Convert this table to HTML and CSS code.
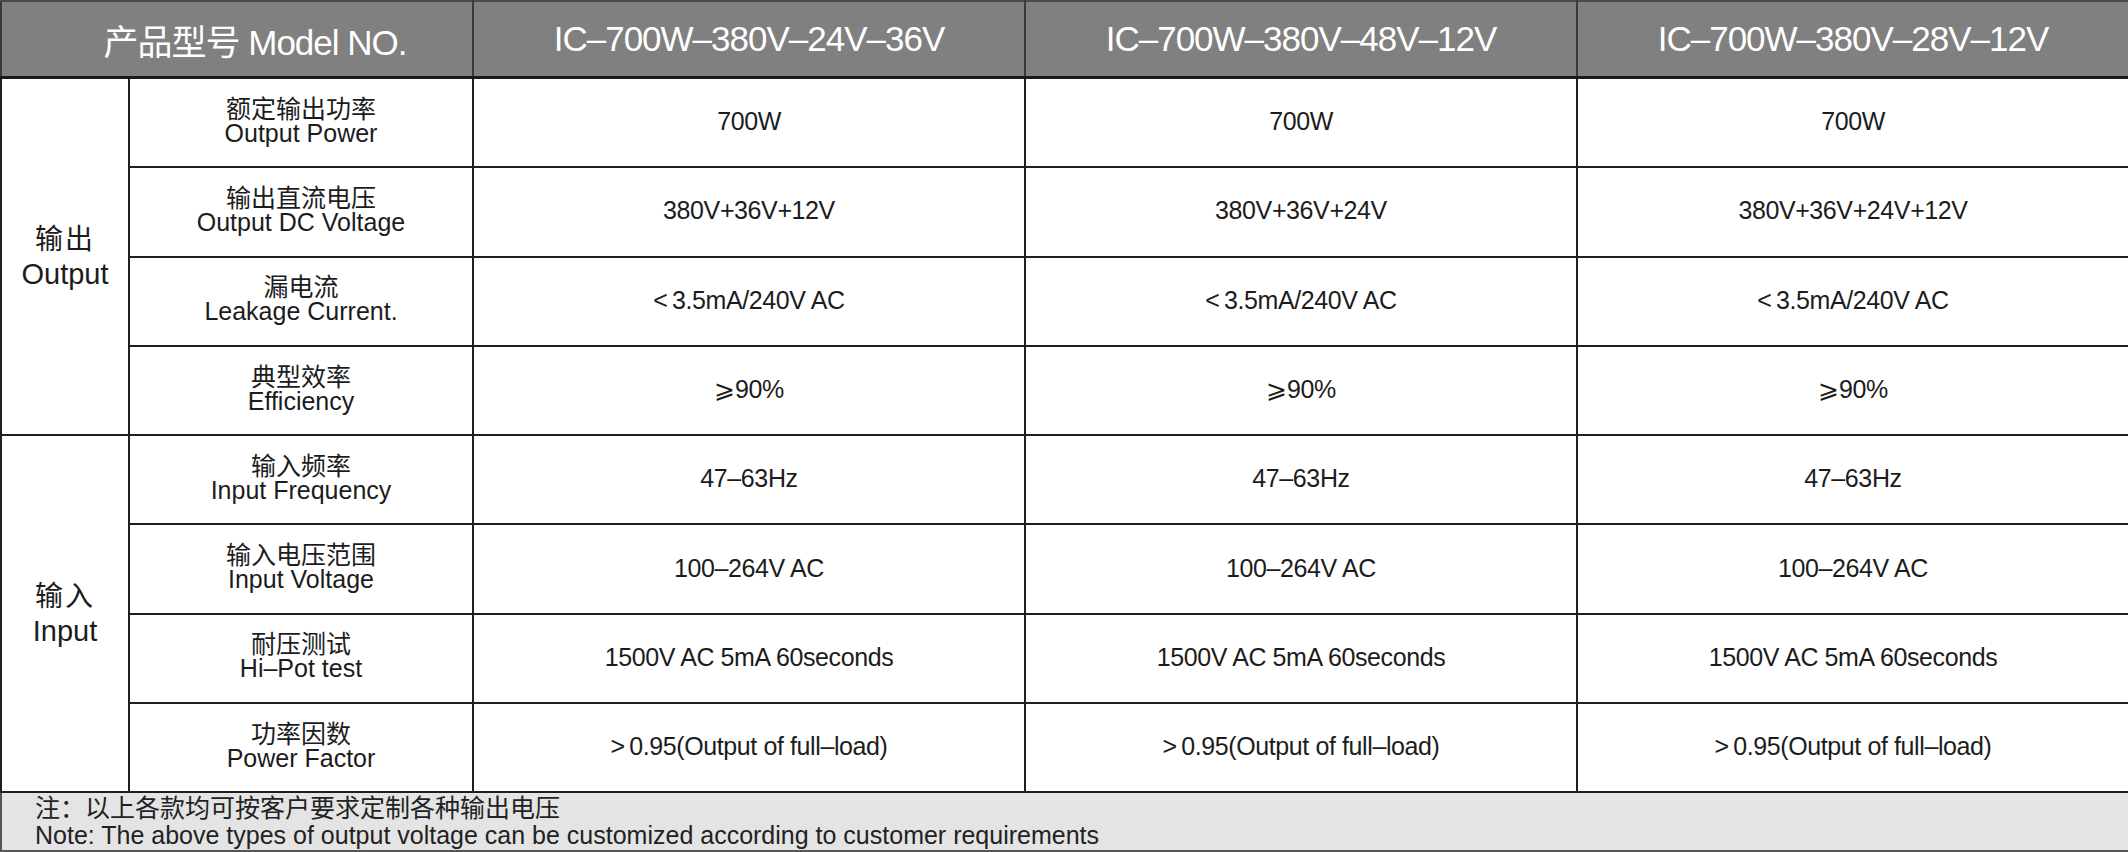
FILE: index.html
```html
<!DOCTYPE html>
<html lang="zh-CN">
<head>
<meta charset="utf-8">
<title>IC-700W 规格表</title>
<link rel="stylesheet" href="styles.css">
</head>
<body>
<table class="spec">
  <colgroup>
    <col class="c-group">
    <col class="c-label">
    <col class="c-data">
    <col class="c-data">
    <col class="c-data">
  </colgroup>
  <thead>
    <tr class="head">
      <th colspan="2" class="head-title">产品型号 Model NO.</th>
      <th>IC–700W–380V–24V–36V</th>
      <th>IC–700W–380V–48V–12V</th>
      <th>IC–700W–380V–28V–12V</th>
    </tr>
  </thead>
  <tbody>
    <tr>
      <td rowspan="4" class="group"><span class="zh">输出</span><span class="en">Output</span></td>
      <td class="label"><span class="zh">额定输出功率</span><span class="en">Output Power</span></td>
      <td>700W</td><td>700W</td><td>700W</td>
    </tr>
    <tr>
      <td class="label"><span class="zh">输出直流电压</span><span class="en">Output DC Voltage</span></td>
      <td>380V+36V+12V</td><td>380V+36V+24V</td><td>380V+36V+24V+12V</td>
    </tr>
    <tr>
      <td class="label"><span class="zh">漏电流</span><span class="en">Leakage Current.</span></td>
      <td>&lt;&#8201;3.5mA/240V AC</td><td>&lt;&#8201;3.5mA/240V AC</td><td>&lt;&#8201;3.5mA/240V AC</td>
    </tr>
    <tr>
      <td class="label"><span class="zh">典型效率</span><span class="en">Efficiency</span></td>
      <td>⩾90%</td><td>⩾90%</td><td>⩾90%</td>
    </tr>
    <tr>
      <td rowspan="4" class="group"><span class="zh">输入</span><span class="en">Input</span></td>
      <td class="label"><span class="zh">输入频率</span><span class="en">Input Frequency</span></td>
      <td>47–63Hz</td><td>47–63Hz</td><td>47–63Hz</td>
    </tr>
    <tr>
      <td class="label"><span class="zh">输入电压范围</span><span class="en">Input Voltage</span></td>
      <td>100–264V AC</td><td>100–264V AC</td><td>100–264V AC</td>
    </tr>
    <tr>
      <td class="label"><span class="zh">耐压测试</span><span class="en">Hi–Pot test</span></td>
      <td>1500V AC 5mA 60seconds</td><td>1500V AC 5mA 60seconds</td><td>1500V AC 5mA 60seconds</td>
    </tr>
    <tr>
      <td class="label"><span class="zh">功率因数</span><span class="en">Power Factor</span></td>
      <td>&gt;&#8201;0.95(Output of full–load)</td><td>&gt;&#8201;0.95(Output of full–load)</td><td>&gt;&#8201;0.95(Output of full–load)</td>
    </tr>
  </tbody>
  <tfoot>
    <tr class="note">
      <td colspan="5">
        <span class="zh">注：以上各款均可按客户要求定制各种输出电压</span>
        <span class="en">Note: The above types of output voltage can be customized according to customer requirements</span>
      </td>
    </tr>
  </tfoot>
</table>
</body>
</html>
```

FILE: styles.css
```css
html, body {
  margin: 0;
  padding: 0;
  background: #ffffff;
}

body {
  width: 2128px;
  height: 852px;
  overflow: hidden;
  font-family: "Liberation Sans", "Noto Sans CJK SC", sans-serif;
  color: #1c1c1c;
}

.spec {
  width: 2128px;
  border-collapse: collapse;
  table-layout: fixed;
}

.c-group { width: 128px; }
.c-label { width: 344px; }
.c-data { width: 552px; }

.spec th,
.spec td {
  border: 2px solid #1e1e1e;
  padding: 0;
  text-align: center;
  vertical-align: middle;
  font-weight: normal;
}

.head th {
  height: 74px;
  background: #808080;
  color: #ffffff;
  font-size: 35px;
  letter-spacing: -1px;
  border-top: 2px solid #4a4a4a;
  border-bottom: 3px solid #1a1a1a;
  border-left-color: #3a3a3a;
  border-right-color: #3a3a3a;
}

.head .head-title {
  padding-left: 36px;
}

.spec tbody td {
  height: 87.3px;
  font-size: 25px;
  line-height: 28px;
  letter-spacing: -0.4px;
}

.spec tbody tr > td:nth-last-child(-n+3) {
  height: 84.3px;
  padding-bottom: 3px;
}

.label span,
.group span,
.note span {
  display: block;
  white-space: nowrap;
}

.spec tbody .label {
  letter-spacing: 0;
}

.label .zh,
.label .en {
  height: 24px;
  line-height: 24px;
}

.label .en {
  margin-bottom: 4px;
}

.spec tbody .group {
  font-size: 29px;
  letter-spacing: 0;
}

.group .zh,
.group .en {
  height: 34px;
  line-height: 34px;
}

.group .zh {
  font-size: 28px;
  letter-spacing: 2px;
}

.note td {
  height: 57px;
  background: #e4e4e4;
  text-align: left;
  padding-left: 33px;
  font-size: 25px;
  color: #222222;
  border-top: 2px solid #3a3a3a;
  border-bottom: 3px solid #555555;
  border-left: 2px solid #555555;
  border-right: 2px solid #555555;
}

.note .zh,
.note .en {
  height: 27px;
  line-height: 27px;
}
```
